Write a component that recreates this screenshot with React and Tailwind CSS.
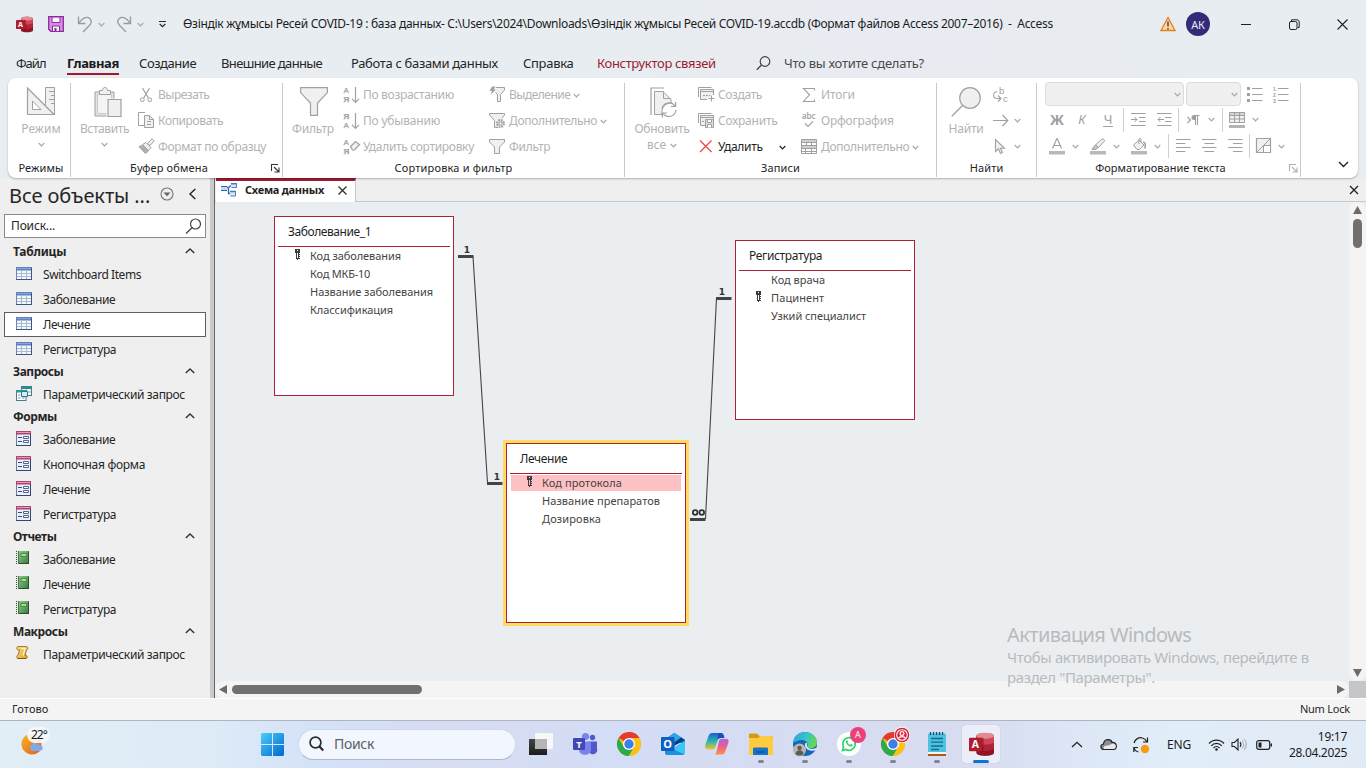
import React from "react";

/* ---------- shared helpers ---------- */
const Svg = ({ w, h, children, className = "" }) => (
  <svg width={w} height={h} viewBox={`0 0 ${w} ${h}`} fill="none" className={"shrink-0 overflow-visible " + className}>
    {children}
  </svg>
);

const Chev = ({ className = "text-[#a8a8a8]" }) => (
  <Svg w={7} h={5} className={className}>
    <path d="M.7 1l2.8 2.8L6.3 1" stroke="currentColor" strokeWidth="1.2" />
  </Svg>
);

const G = "#a0a0a0";
const F = "#f0f0f0";

/* ---------- ribbon icons ---------- */
const IconDesign = () => (
  <Svg w={28} h={28}>
    <path d="M18.500 18V.500h9v27" fill={F} stroke={G} />
    <path d="M22 4.500h5M24 8.500h3M22 12.500h5M24 16.500h3" stroke={G} />
    <path d="M.5 1v26.500h26.500z" fill={F} stroke={G} strokeWidth="1.2" />
    <path d="M5.500 14v8.500H14z" fill="#fff" stroke={G} />
  </Svg>
);
const IconPaste = () => (
  <Svg w={28} h={31}>
    <path d="M1 5h19v24H1z" fill="#e4e4e4" stroke={G} />
    <path d="M3.500 7.500h14v19h-14z" fill="#f4f4f4" stroke="#c8c8c8" />
    <path d="M5.500 7.500v-4h3c0-4 5-4 5 0h3v4z" fill={F} stroke={G} />
    <path d="M12.500 11.500h15v19h-15z" fill="#fff" />
    <path d="M14 12.500h13v17H14z" fill={F} stroke={G} strokeWidth="1.2" />
  </Svg>
);
const IconFunnelBig = () => (
  <Svg w={28} h={29}>
    <path d="M.6.600h26.800v5L17.500 16v12.400h-7V16L.6 5.600z" fill={F} stroke={G} strokeWidth="1.2" />
  </Svg>
);
const IconRefresh = () => (
  <Svg w={29} h={31}>
    <path d="M2 28V1h13" stroke={G} strokeWidth="1.200" />
    <path d="M5.500 27.500v-23H14l8 8V16c-5 0-10 4-9 11.500z" fill={F} stroke={G} />
    <path d="M14.500 4.500v7h7" stroke={G} />
    <path d="M13 22a7.200 7.200 0 0113-3M27 23a7.200 7.200 0 01-13 3.500" stroke={G} strokeWidth="1.200" />
    <path d="M26.700 15v4.500H22M13.300 30.500v-4.500H18" stroke={G} strokeWidth="1.200" />
  </Svg>
);
const IconFindBig = () => (
  <Svg w={30} h={30}>
    <circle cx="19" cy="11" r="10.300" fill={F} stroke={G} strokeWidth="1.200" />
    <path d="M11.500 18.500L.8 29.200" stroke={G} strokeWidth="1.300" />
  </Svg>
);
const IconCut = () => (
  <Svg w={16} h={16}>
    <path d="M4.500 1l5.800 10M11.500 1L5.700 11" stroke={G} strokeWidth="1.200" />
    <circle cx="4.300" cy="12.700" r="1.900" stroke={G} />
    <circle cx="11.700" cy="12.700" r="1.900" stroke={G} />
  </Svg>
);
const IconCopy = () => (
  <Svg w={17} h={17}>
    <path d="M7 13.500H.500V.500H7" stroke={G} />
    <path d="M6.500 3.500h5l4 4v8h-9z" fill={F} stroke={G} />
    <path d="M11.500 3.500v4h4M9 9.500h4M9 12.500h4" stroke={G} />
  </Svg>
);
const IconPainter = () => (
  <Svg w={17} h={17}>
    <path d="M1 8.500l4-1L10.500 13l-3 2.500z" fill="#bdbdbd" stroke={G} />
    <path d="M4.500 6.500l3.500-2 5 5-2.500 3z" fill={F} stroke={G} />
    <path d="M9.500 5.500L14 .800l2.200 2.200L12 7.500z" fill={F} stroke={G} />
    <path d="M2 9l5.500 5M4 8.500l5 5" stroke={G} />
  </Svg>
);
const SortGlyph = ({ a, b, children }) => (
  <Svg w={18} h={18}>
    <text x="0.500" y="6.800" fontSize="8" fontWeight={a === "А" ? "400" : "700"} fill={G} stroke={G} strokeWidth=".25" fontFamily="Liberation Sans, sans-serif">{a}</text>
    <text x="0.500" y="16.300" fontSize="8" fontWeight={b === "А" ? "400" : "700"} fill={G} stroke={G} strokeWidth=".25" fontFamily="Liberation Sans, sans-serif">{b}</text>
    {children}
  </Svg>
);
const SortArrow = () => <path d="M12.500 1v15M9 12.800l3.500 3.500 3.500-3.500" stroke={G} strokeWidth="1.200" />;
const Eraser = () => <path d="M7.500 8.500l5-5 4 3-5 5.500h-2z" fill={F} stroke={G} strokeWidth="1.200" />;
const IconFunnelFlash = () => (
  <Svg w={17} h={17}>
    <path d="M7 1.500h8.500V4L11.500 8.500v7h-3v-7L6.500 6.500" fill={F} stroke={G} />
    <path d="M3 .500h3.500L5 3.500h2L1.500 9 3 5H.500z" fill={G} />
  </Svg>
);
const IconFunnelGear = () => (
  <Svg w={17} h={17}>
    <path d="M9 15.500H5.500V8.500L.5 3V1.500h15V3l-2.500 3" fill={F} stroke={G} />
    <circle cx="11.500" cy="11.500" r="3.200" fill="#fff" stroke={G} strokeWidth="2.500" strokeDasharray="1.700 .8" />
    <circle cx="11.500" cy="11.500" r="1.400" stroke={G} />
  </Svg>
);
const IconFunnel = () => (
  <Svg w={17} h={17}>
    <path d="M.5 1.500h15V4L10.500 9v6.500h-5V9L.5 4z" fill={F} stroke={G} />
  </Svg>
);
const IconNewRec = () => (
  <Svg w={17} h={17}>
    <path d="M.5 11V1.500h13" stroke={G} />
    <path d="M9 13.500H2.500v-10h13V9" fill={F} stroke={G} />
    <path d="M3 5.500h12" stroke={G} />
    <path d="M5 9.500h7" stroke={G} strokeDasharray="2 1" />
    <path d="M13.500 9.500v6M10.500 12.500h6" stroke={G} />
  </Svg>
);
const IconSaveRec = () => (
  <Svg w={17} h={17}>
    <path d="M.5 11V1.500h13" stroke={G} />
    <path d="M7 13.500H2.500v-10h13V7" fill={F} stroke={G} />
    <path d="M3 5.500h12M4 9.500h2" stroke={G} />
    <path d="M7.500 7.500h8v8h-8z" fill="#ddd" stroke={G} />
    <path d="M9.500 7.500h4v3h-4zM9.500 15.500v-3h4v3" fill="#fff" stroke={G} />
  </Svg>
);
const IconDelete = () => (
  <Svg w={17} h={17}>
    <path d="M2 2.500l11.500 11.500M13.500 2.500L2 14" stroke="#e8474c" strokeWidth="1.300" />
  </Svg>
);
const IconSigma = () => (
  <Svg w={16} h={16}>
    <path d="M13.500 3.500v-2h-11l6 6.300-6 6.700h11v-2" stroke={G} strokeWidth="1.100" />
  </Svg>
);
const IconSpell = () => (
  <Svg w={16} h={17}>
    <text x="1" y="7" fontSize="8" fill={G} stroke={G} strokeWidth=".2" fontFamily="Noto Sans, sans-serif">abc</text>
    <path d="M4 11.500l3 3 5-5" stroke={G} strokeWidth="1.100" />
  </Svg>
);
const IconMore = () => (
  <Svg w={17} h={17}>
    <path d="M.5 1.500h15v14H.500z" fill="#fff" stroke={G} />
    <path d="M1 2h14v3H1zM1 8h14v2H1z" fill="#cfcfcf" />
    <path d="M.5 4.500h15M.500 7.500h15M.500 10.500h15M4.500 10.500v5M10.500 10.500v5M5.500 4.500v3M10.500 4.500v3M.5 13.500h15" stroke={G} />
  </Svg>
);
const IconReplace = () => (
  <Svg w={17} h={17}>
    <text x="6" y="8" fontSize="9.500" fill={G} fontFamily="Liberation Sans, sans-serif">b</text>
    <text x="10" y="16" fontSize="9.500" fill={G} fontFamily="Liberation Sans, sans-serif">c</text>
    <path d="M4 5.500C-.5 6.500-.5 12 4 12.500h3.500M5 9.500l3 3-3 3" stroke={G} strokeWidth="1.100" />
  </Svg>
);
const IconGoTo = () => (
  <Svg w={17} h={12}>
    <path d="M0 6.500h14.500M9.500 1l5.300 5.500L9.500 12" stroke={G} strokeWidth="1.100" />
  </Svg>
);
const IconCursor = () => (
  <Svg w={12} h={17}>
    <path d="M1.500 1.500v12l3-2.500 2 4.500 2-1-2-4.200h4z" fill={F} stroke={G} strokeWidth="1.100" />
  </Svg>
);
const IconBullets = () => (
  <Svg w={16} h={16}>
    <path d="M0 1h3v3H0zM0 7h3v3H0zM0 13h3v3H0z" fill={G} />
    <path d="M5 2.500h10.500M5 8.500h10.500M5 14.500h10.500" stroke={G} />
  </Svg>
);
const IconNumbers = () => (
  <Svg w={16} h={17}>
    {["1", "2", "3"].map((n, i) => (
      <text key={n} x="0" y={4.500 + i * 6} fontSize="5" fill={G} stroke={G} strokeWidth=".2" fontFamily="Liberation Sans, sans-serif">{n}</text>
    ))}
    <path d="M5 2.500h10.500M5 8.500h10.500M5 14.500h10.500" stroke={G} />
  </Svg>
);
const IconIndent = ({ out }) => (
  <Svg w={15} h={14}>
    <path d="M0 .5h14.500M8 4.500h6.500M8 8.500h6.500M0 12.500h14.500" stroke={G} />
    <path d={out ? "M7 6.500H1M3.500 4L1 6.500 3.500 9" : "M0 6.500h6M3.500 4L6 6.500 3.500 9"} stroke={G} />
  </Svg>
);
const IconPara = () => (
  <Svg w={13} h={12}>
    <path d="M.5 3l3 3-3 3" stroke={G} strokeWidth="1.200" />
    <path d="M12.500 1.500H7.500M8.500 11V1.500M10.500 11V1.500" stroke={G} strokeWidth="1.100" />
    <path d="M8.500 1H7a2.300 2.300 0 000 5h1.500z" fill={G} />
  </Svg>
);
const IconGridlines = () => (
  <Svg w={17} h={16}>
    <path d="M.5.500h15v10H.500z" fill={F} stroke={G} />
    <path d="M1 1h14v2.500H1z" fill="#d4d4d4" />
    <path d="M.5 3.500h15M.500 7h15M5.500.500v10M10.500.500v10" stroke={G} />
    <path d="M0 13h16v3H0z" fill="#b4b4b4" />
  </Svg>
);
const IconFontColor = () => (
  <Svg w={16} h={17}>
    <path d="M3.500 10.500L7.700.800h.6l4.200 9.700M5 7.500h6" stroke={G} strokeWidth="1.200" />
    <path d="M0 13h16v3.500H0z" fill="#b8b8b8" />
  </Svg>
);
const IconHighlighter = () => (
  <Svg w={16} h={17}>
    <path d="M5.500 7l6.500-6c1-.5 3 1 2.500 2L8.500 9.500z" fill={F} stroke={G} />
    <path d="M5.500 7L3.500 9 2 11.500h3.500l3-2z" fill="#c4c4c4" stroke={G} />
    <path d="M0 13h16v3.500H0z" fill="#b8b8b8" />
  </Svg>
);
const IconBucket = () => (
  <Svg w={16} h={17}>
    <path d="M2.500 7L8 2l5 5-4.500 4.500H6z" fill={F} stroke={G} />
    <path d="M8 6V1.500c0-1.500 2-1.500 2 0V4" stroke={G} />
    <path d="M12 4c2.500 0 2.500 3 2 6.500" stroke={G} strokeWidth="1.600" />
    <path d="M0 13h16v3.500H0z" fill="#b8b8b8" />
  </Svg>
);
const IconAlign = ({ d }) => (
  <Svg w={15} h={14}>
    <path d={d} stroke={G} />
  </Svg>
);
const IconAltRow = () => (
  <Svg w={16} h={16}>
    <path d="M.5.500h14v14H.500z" fill={F} stroke={G} strokeWidth="1.200" />
    <path d="M.500 14.500L14.500.500M7.500 7.500v7M7 7.500h7.500" stroke={G} />
    <path d="M8 8h6v6H8z" fill="#fff" />
  </Svg>
);
const Launcher = ({ className }) => (
  <Svg w={9} h={9} className={className}>
    <path d="M.5 7V.500H7M3 3l4.500 4.500M8 3.500V8H3.500" stroke="currentColor" strokeWidth="1.100" />
  </Svg>
);

/* ---------- ribbon parts ---------- */
const Group = ({ w, label, labelCls = "tracking-[0.13px]", pad = "", launcher, children }) => (
  <div className={"relative flex h-[94px] flex-col border-r border-[#c9c9c9] " + w}>
    <div className="flex h-[76px]">{children}</div>
    <div className={"h-[18px] whitespace-nowrap text-center text-[11px] leading-[18px] text-[#242424] " + labelCls + " " + pad}>{label}</div>
    {launcher}
  </div>
);
const Big = ({ icon, text, sub, cls = "", iconCls = "h-[31px]", w }) => (
  <div className={"flex shrink-0 flex-col items-center pt-1 text-[12px] text-[#b3b3b3] " + w}>
    <div className={iconCls}>{icon}</div>
    <span className={"mt-[3px] whitespace-nowrap leading-[16px] " + cls}>{text}</span>
    {sub}
  </div>
);
const Small = ({ icon, text, cls = "tracking-[-0.27px]", chev, dark, gap = "w-5", chevCls = "ml-[3px]" }) => (
  <div className={"flex h-[26px] shrink-0 items-center text-[12px] " + (dark ? "text-[#1f1f1f]" : "text-[#b3b3b3]")}>
    <div className={"-mt-px flex shrink-0 items-center " + gap}>{icon}</div>
    <span className={"whitespace-nowrap leading-[16px] " + cls}>{text}</span>
    {chev && <Chev className={chevCls + (dark ? " text-[#1f1f1f]" : " text-[#a8a8a8]")} />}
  </div>
);
const Col = ({ className = "-mt-px", children }) => <div className={"flex shrink-0 flex-col " + className}>{children}</div>;
const Cell = ({ w, children }) => <div className={"flex shrink-0 items-center justify-center " + w}>{children}</div>;
const Sep = ({ className = "" }) => <div className={"h-6 w-px shrink-0 bg-[#d0d0d0] " + className} />;

const Ribbon = () => (
  <div className="mx-2 flex h-[100px] rounded-lg bg-white pt-[5px] shadow-[0_1px_2px_rgba(0,0,0,0.28)]">
    <Group w="w-[63px]" label="Режимы" pad="pr-0 pl-[4px]">
      <Big w="w-[66px]" icon={<IconDesign />} text="Режим" sub={<Chev className="mt-[5px] text-[#a8a8a8]" />} />
    </Group>
    <Group w="w-[212px]" label="Буфер обмена" labelCls="tracking-[0.14px] pr-[15px]" launcher={<Launcher className="absolute bottom-[4px] right-[2px] text-[#333]" />}>
      <Big w="w-[67px]" icon={<div className="pl-[7px]"><IconPaste /></div>} text="Вставить" cls="tracking-[-0.41px]" sub={<Chev className="mt-[5px] text-[#a8a8a8]" />} />
      <Col>
        <Small icon={<IconCut />} text="Вырезать" cls="tracking-[-0.5px]" />
        <Small icon={<IconCopy />} text="Копировать" cls="tracking-[-0.38px]" />
        <Small icon={<IconPainter />} text="Формат по образцу" cls="tracking-[-0.34px]" />
      </Col>
    </Group>
    <Group w="w-[342px]" label="Сортировка и фильтр" labelCls="tracking-[0.19px]">
      <Big w="w-[60px]" icon={<div className="pl-px"><IconFunnelBig /></div>} text="Фильтр" cls="tracking-[-0.2px] -mt-px" />
      <Col className="-mt-px w-[146px]">
        <Small icon={<SortGlyph a="А" b="Я"><SortArrow /></SortGlyph>} text="По возрастанию" cls="tracking-[-0.31px]" />
        <Small icon={<SortGlyph a="Я" b="А"><SortArrow /></SortGlyph>} text="По убыванию" cls="tracking-[-0.2px]" />
        <Small icon={<SortGlyph a="А" b="Я"><Eraser /></SortGlyph>} text="Удалить сортировку" cls="tracking-[-0.32px]" />
      </Col>
      <Col>
        <Small icon={<IconFunnelFlash />} text="Выделение" cls="tracking-[-0.5px]" chev />
        <Small icon={<IconFunnelGear />} text="Дополнительно" cls="tracking-[-0.32px]" chev />
        <Small icon={<IconFunnel />} text="Фильтр" cls="tracking-[-0.27px]" />
      </Col>
    </Group>
    <Group w="w-[312px]" label="Записи">
      <Big w="w-[74px]" icon={<div className="pl-[2px]"><IconRefresh /></div>} text="Обновить" cls="tracking-[-0.27px]"
        sub={<span className="flex items-center gap-1 leading-[16px]">все<Chev /></span>} />
      <Col className="-mt-px w-[103px] -ml-px mr-px">
        <Small icon={<IconNewRec />} text="Создать" cls="tracking-[-0.37px]" />
        <Small icon={<IconSaveRec />} text="Сохранить" cls="tracking-[-0.22px]" />
        <Small icon={<IconDelete />} text="Удалить" cls="tracking-[-0.28px]" dark chev chevCls="ml-[16px]" />
      </Col>
      <Col className="-mt-px -ml-px">
        <Small icon={<IconSigma />} text="Итоги" cls="tracking-[-0.1px]" />
        <Small icon={<IconSpell />} text="Орфография" cls="tracking-[-0.22px]" />
        <Small icon={<IconMore />} text="Дополнительно" cls="tracking-[-0.3px]" chev />
      </Col>
    </Group>
    <Group w="w-[100px]" label="Найти">
      <Big w="w-[56px]" icon={<div className="pl-px"><IconFindBig /></div>} text="Найти" cls="tracking-[-0.21px] -mt-px ml-[2px]" />
      <Col className="-mt-[2px]">
        <div className="flex h-[26px] shrink-0 items-center"><IconReplace /></div>
        <div className="flex h-[26px] shrink-0 items-center gap-1"><IconGoTo /><Chev /></div>
        <div className="flex h-[26px] shrink-0 items-center pl-[1px]"><IconCursor /><Chev className="ml-2 text-[#a8a8a8]" /></div>
      </Col>
    </Group>
    <Group w="w-[264px]" label="Форматирование текста" labelCls="tracking-[0.02px] pr-[16px]" launcher={<Launcher className="absolute bottom-[4px] right-[2px] text-[#b0b0b0]" />}>
      <Col className="-mt-px pl-2">
        <div className="flex h-6 shrink-0 items-center">
          <div className="flex h-6 w-[139px] items-center justify-end rounded border border-[#dcdcdc] bg-[#f0f0f0] pr-[2px]"><Chev /></div>
          <div className="ml-[2px] flex h-6 w-[55px] items-center justify-end rounded border border-[#dcdcdc] bg-[#f0f0f0] pr-[2px]"><Chev /></div>
          <div className="-mt-px ml-[6px]"><IconBullets /></div>
          <div className="ml-[10px]"><IconNumbers /></div>
        </div>
        <div className="flex h-[27px] shrink-0 items-center text-[#a0a0a0]">
          <Cell w="w-6"><span className="text-[14px] font-bold leading-none">Ж</span></Cell>
          <Cell w="w-[26px]"><span className="text-[13px] italic leading-none">К</span></Cell>
          <Cell w="w-[26px]"><span className="border-b border-[#a0a0a0] px-px text-[13px] leading-[13px]">Ч</span></Cell>
          <Sep className="ml-[2px]" />
          <Cell w="w-7"><IconIndent /></Cell>
          <Cell w="w-6"><IconIndent out /></Cell>
          <Sep className="ml-[2px]" />
          <Cell w="w-7"><IconPara /></Cell>
          <Cell w="w-2"><Chev /></Cell>
          <Sep className="ml-[7px]" />
          <Cell w="w-7"><IconGridlines /></Cell>
          <Cell w="w-2"><Chev /></Cell>
        </div>
        <div className="flex h-[26px] shrink-0 items-center">
          <Cell w="w-6"><IconFontColor /></Cell>
          <Cell w="w-3"><Chev /></Cell>
          <div className="w-[3px]" />
          <Cell w="w-7"><IconHighlighter /></Cell>
          <Cell w="w-2"><Chev /></Cell>
          <div className="w-[6px]" />
          <Cell w="w-[26px]"><IconBucket /></Cell>
          <Cell w="w-[10px]"><Chev /></Cell>
          <Sep className="ml-[6px]" />
          <Cell w="w-7"><IconAlign d="M0 .5h14.500M0 4.500h9.500M0 8.500h14.500M0 12.500h9.500" /></Cell>
          <Cell w="w-6"><IconAlign d="M0 .5h14.500M2.500 4.500h9.500M0 8.500h14.500M2.500 12.500h9.500" /></Cell>
          <Cell w="w-7"><IconAlign d="M0 .5h14.500M5 4.500h9.500M0 8.500h14.500M5 12.500h9.500" /></Cell>
          <Sep />
          <Cell w="w-7"><IconAltRow /></Cell>
          <Cell w="w-[7px]"><Chev /></Cell>
        </div>
      </Col>
    </Group>
    <div className="flex flex-1 items-end justify-end pb-[10px] pr-[9px]">
      <Svg w={11} h={7}><path d="M1 1l4.500 4.500L10 1" stroke="#222" strokeWidth="1.400" /></Svg>
    </div>
  </div>
);

/* ---------- title bar and tabs ---------- */
const AccessLogo = ({ s }) => (
  <svg width={s} height={s} viewBox="0 0 24 24" className="shrink-0">
    <path d="M7 4c0-4 17-4 17 0v16c0 4-17 4-17 0z" fill="#8f1424" />
    <path d="M7 9.500c4 3.500 13 3.500 17 0v6c-4 3.500-13 3.500-17 0z" fill="#b52236" />
    <path d="M7 3.500h17v6.500c-4 3-13 3-17 0z" fill="#cc4559" />
    <ellipse cx="15.500" cy="3.500" rx="8.500" ry="2.900" fill="#e38a93" />
    <path d="M11 5.500h3v14h-3z" fill="#6d0f1c" opacity=".5" />
    <rect x="0" y="5.500" width="12.500" height="13" rx="1" fill="#b01c2e" />
    <text x="6.200" y="15.600" textAnchor="middle" fontSize="10" fontWeight="700" fill="#fff" fontFamily="Open Sans, sans-serif">A</text>
  </svg>
);

const TitleBar = () => (
  <div className="flex h-12 items-center text-[12px] text-[#1c1c1c]">
    <div className="ml-4"><AccessLogo s={17} /></div>
    <Svg w={16} h={16} className="ml-[15px]">
      <path d="M.7.700h14.600v14.600H2.700l-2-2z" fill="#d58fe0" stroke="#8d2a9e" strokeWidth="1.300" />
      <path d="M4 1h8v5.500H4zM4.500 15v-5h7v5" fill="#f6f0f8" stroke="#8d2a9e" />
      <path d="M6.500 12h2v3h-2z" fill="#8d2a9e" />
    </Svg>
    <Svg w={17} h={18} className="ml-[13px] -mt-px">
      <path d="M1.500 1.500v7h7M1.700 8.200C5 3 10 .800 12.800 3.500c3 3 1 5.500-.5 7L6 17" stroke="#9a9a9a" strokeWidth="1.300" />
    </Svg>
    <Chev className="ml-[4px] text-[#a8a8a8]" />
    <Svg w={17} h={18} className="ml-[11px] -mt-px">
      <path d="M14.500 1.500v7h-7M14.300 8.200C11 3 6 .800 3.200 3.500c-3 3-1 5.500.5 7L10 17" stroke="#9a9a9a" strokeWidth="1.300" />
    </Svg>
    <Chev className="ml-[4px] text-[#a8a8a8]" />
    <Svg w={9} h={8} className="ml-[14px]">
      <path d="M1 1.500h7M1.700 4l2.800 2.700L7.300 4" stroke="#2a2a2a" strokeWidth="1.200" />
    </Svg>
    <span className="ml-[16px] w-[961px] whitespace-pre leading-4 tracking-[-0.302px]">
      {"Өзіндік жұмысы Ресей COVID-19 : база данных- C:\\Users\\2024\\Downloads\\Өзіндік жұмысы Ресей COVID-19.accdb (Формат файлов Access 2007–2016)  -  Access"}
    </span>
    <Svg w={16} h={16} className="ml-[16px]">
      <path d="M8 1.500l7 13H1z" fill="#fbd9a0" stroke="#e07f1d" strokeWidth="1.300" />
      <path d="M8 5.500v5M8 12v1.500" stroke="#333" strokeWidth="1.300" />
    </Svg>
    <div className="ml-[10px] flex h-6 w-6 items-center justify-center rounded-full bg-[#332b78] text-[11px] leading-none tracking-[-0.3px] text-[#e9e7f5]">АК</div>
    <Svg w={11} h={11} className="ml-[31px]"><path d="M0 5.500h10" stroke="#222" /></Svg>
    <Svg w={11} h={11} className="ml-[37px]">
      <rect x=".5" y="2.500" width="7.500" height="8" rx="1.500" stroke="#222" />
      <path d="M2.500 2V.800h5.500c1.500 0 2.200 1 2.200 2.200v5.500h-1.500" stroke="#222" />
    </Svg>
    <Svg w={11} h={11} className="ml-[37px]"><path d="M.5.500l10 10M10.500.500l-10 10" stroke="#222" strokeWidth="1.100" /></Svg>
  </div>
);

const tabs = [
  ["Файл", "w-[51px] tracking-[-1px]"],
  ["Создание", "w-[82px] tracking-[-0.44px]"],
  ["Внешние данные", "w-[130px] tracking-[-0.63px]"],
  ["Работа с базами данных", "w-[172px] tracking-[-0.33px]"],
  ["Справка", "w-[74px] tracking-[-0.3px]"],
];
const Tab = ({ t }) => <span className={"shrink-0 whitespace-nowrap " + t[1]}>{t[0]}</span>;
const TabRow = () => (
  <div className="flex h-[30px] items-center pl-4 text-[13px] leading-[18px] text-[#262626]">
    <Tab t={tabs[0]} />
    <div className="mr-5 mt-[3px] flex h-[24px] w-[52px] flex-col">
      <span className="h-[19px] pt-px font-bold tracking-[-0.4px] text-[#1a1a1a]">Главная</span>
      <div className="mt-[1px] h-[2px] w-[52px] shrink-0 bg-[#a4182e]" />
    </div>
    {tabs.slice(1).map((t) => <Tab key={t[0]} t={t} />)}
    <span className="w-[159px] shrink-0 whitespace-nowrap tracking-[-0.33px] text-[#9b1c2f]">Конструктор связей</span>
    <Svg w={15} h={15}>
      <circle cx="9" cy="5.500" r="4.800" stroke="#444" strokeWidth="1.200" />
      <path d="M5.500 9L.8 13.800" stroke="#444" strokeWidth="1.300" />
    </Svg>
    <span className="ml-[13px] whitespace-nowrap tracking-[-0.27px] text-[#4a4a4a]">Что вы хотите сделать?</span>
  </div>
);

/* ---------- navigation pane ---------- */
const TableIcon = () => (
  <Svg w={16} h={13}>
    <rect x=".5" y=".5" width="15" height="12" fill="#f4f7fc" stroke="#6c86b8" />
    <path d="M0 0h16v3.500H0z" fill="#5f80bd" />
    <path d="M1 1.500h14" stroke="#8ba6d8" />
    <path d="M1 6.500h14M1 9.500h14M5.500 3.500v9M10.500 3.500v9" stroke="#a9b8d4" />
    <path d="M0 12.500h16M15.500 1v12" stroke="#3d5486" />
  </Svg>
);
const QueryIcon = () => (
  <Svg w={16} h={15}>
    <rect x="5.500" y=".5" width="10" height="9" fill="#f1f7f9" stroke="#3d7f8c" />
    <path d="M5 0h11v3H5z" fill="#2d8a8a" />
    <path d="M10.500 3v6M6 6h9" stroke="#8fb0b8" />
    <rect x=".5" y="4.500" width="9.500" height="10" fill="#fff" stroke="#4f7597" />
    <path d="M0 4h10v2.500H0z" fill="#3a9494" />
    <path d="M2 9h2.500M6 9h2.500M2 12h2.500M6 12h2.500" stroke="#6f8fb0" />
    <path d="M5.500 5.500h6v5h-6z" fill="#d6ecf2" stroke="#2a7a88" />
  </Svg>
);
const FormIcon = () => (
  <Svg w={15} h={15}>
    <rect x=".5" y=".5" width="14" height="14" fill="#e8effb" stroke="#6b7da3" />
    <path d="M0 0h15v3.500H0z" fill="#b4426f" />
    <path d="M1 1.500h13" stroke="#e49ab9" />
    <path d="M2 6.500h4M2 10.500h4" stroke="#3c4d73" />
    <path d="M7.500 5.500h5v2h-5zM7.500 9.500h5v2h-5z" fill="#fff" stroke="#54658d" />
    <path d="M0 14.500h15M14.500 3v12" stroke="#34466e" />
  </Svg>
);
const ReportIcon = () => (
  <Svg w={14} h={14}>
    <defs>
      <linearGradient id="rep" x1="0" y1="0" x2="1" y2="1"><stop offset="0" stopColor="#8ecb86" /><stop offset=".6" stopColor="#5c9c5a" /><stop offset="1" stopColor="#3c6f3f" /></linearGradient>
    </defs>
    <path d="M2 0h11v13H2z" fill="url(#rep)" />
    <path d="M12.500.5v12.500M2 12.500h11" stroke="#2d4f31" />
    <rect x="5" y="2.500" width="5.500" height="3" fill="#a8dba0" stroke="#4a8a4a" />
    <path d="M.5 0v13" stroke="#444" strokeDasharray="1 1" />
    <path d="M1.500 0v13" stroke="#e4ece4" />
    <path d="M2.500 0v13" stroke="#47784a" />
  </Svg>
);
const MacroIcon = () => (
  <Svg w={13} h={14}>
    <defs>
      <linearGradient id="mac" x1="0" y1="0" x2="1" y2="1"><stop offset="0" stopColor="#f8dc84" /><stop offset="1" stopColor="#e0a230" /></linearGradient>
    </defs>
    <path d="M2 .5h8.500c2 .5 1.500 3 0 3.500l-1.500 5.500h1.500c1 .5 1 2.500 0 3H2c-2-.5-1.500-3 0-3.500L3.700 4H2C.3 3.500.3 1 2 .5z" fill="url(#mac)" stroke="#a87a22" />
    <path d="M5.200 2.500h4L7 9.500" stroke="#fdf1c0" strokeWidth="1.300" />
    <path d="M1.500 12.500h8.500" stroke="#7b5614" />
  </Svg>
);
const Caret = () => <Svg w={10} h={6}><path d="M.8 5L5 .900 9.200 5" stroke="#333" strokeWidth="1.400" /></Svg>;

const nav = [
  { h: "Таблицы", c: "tracking-[-0.22px]", icon: TableIcon, items: [["Switchboard Items", "tracking-[-0.43px]"], ["Заболевание", "tracking-[-0.38px]"], ["Лечение", "tracking-[-0.38px]", true], ["Регистратура", "tracking-[-0.36px]"]] },
  { h: "Запросы", c: "tracking-[-0.48px]", icon: QueryIcon, items: [["Параметрический запрос", "tracking-[-0.35px]"]] },
  { h: "Формы", c: "tracking-[-0.5px]", icon: FormIcon, items: [["Заболевание", "tracking-[-0.38px]"], ["Кнопочная форма", "tracking-[-0.3px]"], ["Лечение", "tracking-[-0.38px]"], ["Регистратура", "tracking-[-0.36px]"]] },
  { h: "Отчеты", c: "tracking-[-0.47px]", icon: ReportIcon, items: [["Заболевание", "tracking-[-0.38px]"], ["Лечение", "tracking-[-0.38px]"], ["Регистратура", "tracking-[-0.36px]"]] },
  { h: "Макросы", c: "tracking-[-0.43px]", icon: MacroIcon, items: [["Параметрический запрос", "tracking-[-0.35px]"]] },
];

const NavPane = () => (
  <div className="flex w-[210px] shrink-0 flex-col bg-[#efefef] text-[12px] leading-4 text-[#262626]">
    <div className="flex h-9 items-center pl-[9px] pr-[14px]">
      <span className="w-[151px] whitespace-nowrap text-[20px] leading-7 tracking-[-0.08px]">Все объекты ...</span>
      <Svg w={14} h={14} className="-mt-[5px]">
        <circle cx="7" cy="7" r="6" stroke="#777" strokeWidth="1.100" />
        <path d="M3.500 5.500h7L7 9.200z" fill="#666" />
      </Svg>
      <Svg w={7} h={12} className="ml-auto -mt-[5px]"><path d="M6.300 1L1 6l5.300 5" stroke="#222" strokeWidth="1.400" /></Svg>
    </div>
    <div className="ml-1 flex h-6 w-[202px] items-center justify-between border border-[#8a8a8a] bg-white pl-[6px] pr-[3px]">
      <span className="tracking-[-0.16px]">Поиск...</span>
      <Svg w={17} h={17}>
        <circle cx="10.500" cy="6" r="5" stroke="#444" strokeWidth="1.200" />
        <path d="M7 9.700L1 15.500" stroke="#444" strokeWidth="1.300" />
      </Svg>
    </div>
    <div className="flex flex-col pt-1">
      {nav.map((g) => (
        <div key={g.h} className="flex flex-col">
          <div className="flex h-5 items-center justify-between pl-[13px] pr-[15px]">
            <span className={"font-bold " + g.c}>{g.h}</span>
            <div className="-mt-[2px]"><Caret /></div>
          </div>
          {g.items.map(([t, c, sel], i) => (
            <div key={i} className={"mx-1 flex h-[25px] items-center border pl-[11px] " + (sel ? "border-[#5e5e5e] bg-white" : "border-transparent")}>
              <div className="-mt-[3px] w-[27px]"><g.icon /></div>
              <span className={"whitespace-nowrap pt-px " + c}>{t}</span>
            </div>
          ))}
        </div>
      ))}
    </div>
  </div>
);

/* ---------- relationship diagram ---------- */
const Key = () => (
  <svg width="6" height="11" viewBox="0 0 6 11" shapeRendering="crispEdges">
    <path d="M0 0h5v4H0z M1 4h1v6H1z M3 4h1v6H3z M2 9h1v2H2z M4 5h1v1H4z M4 7h1v1H4z M4 9h1v1H4z" fill="#3c3c3c" />
    <path d="M2 1h1v1H2z" fill="#fff" />
  </svg>
);
const Node = ({ pos, title, titleCls, rows, active }) => (
  <div className={"absolute flex h-[180px] w-[180px] flex-col border border-[#ae2033] bg-white " + pos + (active ? " shadow-[0_0_0_3px_#ffdb61]" : "")}>
    <div className="mx-[3px] flex h-[30px] border-b border-[#ae2033] pl-[10px]">
      <span className={"whitespace-nowrap text-[12px] leading-[29px] text-[#1f1f1f] " + titleCls}>{title}</span>
    </div>
    {rows.map(([t, c, key], i) => (
      <div key={t} className="flex h-[18px] items-center px-1">
        <div className={"flex h-4 w-[170px] items-center " + (active && i === 0 ? "bg-[#fec1c3]" : "")}>
          <div className="flex w-[31px] pb-[3px] pl-[16px]">{key && <Key />}</div>
          <span className={"whitespace-nowrap text-[11px] leading-4 text-[#444] " + c}>{t}</span>
        </div>
      </div>
    ))}
  </div>
);

const Arrow = ({ d }) => <Svg w={9} h={9}><path d={d} fill="#6b6b6b" /></Svg>;

const Canvas = () => (
  <div className="flex min-w-0 flex-1 flex-col border-l border-[#666]">
    <div className="flex h-6 bg-[#efefef]">
      <div className="w-px border-b border-[#c8c8c8]" />
      <div className="flex w-[140px] items-center border-t-[3px] border-r border-t-[#a4182e] border-r-[#c8c8c8] bg-white pb-[3px] pl-[5px]">
        <Svg w={16} h={14}>
          <path d="M0 4.500h7M7.500 4.500L10 2.500M7.500 4.500v6H10" stroke="#2c62b8" strokeWidth="1.300" />
          <path d="M0 3h6v5H0z" fill="#c7d8f2" /><path d="M0 3.500h6M0 7.500h6" stroke="#2c62b8" />
          <path d="M10 0h6v5h-6zM9 8h6v5.500H9z" fill="#dce7f8" /><path d="M10 .8h6M9 8.500h6" stroke="#3f78cf" strokeWidth="1.600" />
          <path d="M10.500 4.500h5v-4M9.500 13h5V8.500" stroke="#5c7fb8" />
        </Svg>
        <span className="ml-2 whitespace-nowrap text-[11px] font-bold leading-4 tracking-[-0.25px] text-[#222]">Схема данных</span>
        <Svg w={9} h={9} className="ml-[14px]"><path d="M.5.500l8 8M8.500.500l-8 8" stroke="#333" strokeWidth="1.300" /></Svg>
      </div>
      <div className="flex flex-1 items-center justify-end border-b border-[#c8c8c8] pr-[7px]">
        <Svg w={10} h={10}><path d="M1 1l8 8M9 1L1 9" stroke="#222" strokeWidth="1.300" /></Svg>
      </div>
    </div>
    <div className="flex min-h-0 flex-1 bg-[#ebeef1]">
      <div className="flex min-w-0 flex-1 flex-col">
        <div className="relative flex-1">
          <svg className="absolute left-0 top-0" width="1134" height="479" viewBox="215 202 1134 479" fill="none">
            <path d="M473 256.500L487.500 483M716.500 298L705.500 519" stroke="#444" strokeWidth="1.100" />
            <path d="M458 256.500h15.500M487 483.500h15.500M716 298.500h15.500M690 519.500h15.500" stroke="#444" strokeWidth="3" />
            <g fill="#333" fontSize="9" fontWeight="700" fontFamily="DejaVu Sans, sans-serif" textAnchor="middle">
              <text x="467" y="252.500">1</text>
              <text x="497" y="479.500">1</text>
              <text x="722" y="294.500">1</text>
            </g>
            <circle cx="695.200" cy="512.500" r="2.300" stroke="#333" strokeWidth="1.800" />
            <circle cx="701.800" cy="512.500" r="2.300" stroke="#333" strokeWidth="1.800" />
          </svg>
          <Node pos="left-[59px] top-[14px]" title="Заболевание_1" titleCls="tracking-[-0.42px]"
            rows={[["Код заболевания", "tracking-[-0.06px]", true], ["Код МКБ-10", "tracking-[-0.22px]"], ["Название заболевания", "tracking-[-0.04px]"], ["Классификация", "tracking-[-0.04px]"]]} />
          <Node pos="left-[520px] top-[38px]" title="Регистратура" titleCls="tracking-[-0.36px]"
            rows={[["Код врача", ""], ["Пацинент", "tracking-[0.1px]", true], ["Узкий специалист", "tracking-[-0.05px]"]]} />
          <Node active pos="left-[291px] top-[241px]" title="Лечение" titleCls="tracking-[-0.38px]"
            rows={[["Код протокола", "tracking-[0.1px]", true], ["Название препаратов", "tracking-[0.05px]"], ["Дозировка", "tracking-[0.13px]"]]} />
          <div className="absolute left-[792px] top-[420px] z-10 flex w-[330px] flex-col whitespace-nowrap text-[#b8bbbd]">
            <span className="text-[20px] leading-[26px] tracking-[-0.6px]">Активация Windows</span>
            <span className="-mt-px text-[15px] leading-5 tracking-[-0.365px]">Чтобы активировать Windows, перейдите в</span>
            <span className="text-[15px] leading-5 tracking-[-0.38px]">раздел "Параметры".</span>
          </div>
        </div>
        <div className="flex h-[17px] items-center rounded-full bg-[#f4f4f4] px-1">
          <Arrow d="M8 0v9L0 4.500z" />
          <div className="ml-1 h-[9px] w-[190px] rounded-full bg-[#707070]" />
          <div className="ml-auto"><Arrow d="M1 0v9l8-4.500z" /></div>
        </div>
      </div>
      <div className="flex w-[17px] flex-col">
        <div className="flex flex-1 flex-col items-center rounded-full bg-[#f4f4f4] py-1">
          <Arrow d="M0 8h9L4.500 0z" />
          <div className="mt-1 h-[29px] w-[9px] rounded-full bg-[#707070]" />
          <div className="mt-auto"><Arrow d="M0 1h9L4.500 9z" /></div>
        </div>
        <div className="h-[17px] bg-[#c5c6ca]" />
      </div>
    </div>
  </div>
);

/* ---------- taskbar ---------- */
const App32 = ({ children, dot }) => (
  <div className="flex h-[47px] w-11 shrink-0 flex-col items-center pt-[11px]">
    <svg width="26" height="24" viewBox="0 0 26 24" className="overflow-visible">{children}</svg>
    {dot && <div className="mt-[4px] h-[3px] w-[6px] rounded-full bg-[#82868f]" />}
  </div>
);
const Chrome = () => (
  <g>
    <circle cx="13" cy="12" r="12" fill="#fbc116" />
    <path d="M13 12L2.600 6A12 12 0 0123.400 6z" fill="#e33b2e" />
    <path d="M13 0a12 12 0 0110.400 6H13z" fill="#e33b2e" />
    <path d="M2.600 6A12 12 0 0013 24l5.200-9L13 12 7.800 15z" fill="#2da94f" />
    <path d="M13 6h10.400A12 12 0 0113 24l5.200-9z" fill="#fbc116" />
    <circle cx="13" cy="12" r="6" fill="#fff" />
    <circle cx="13" cy="12" r="4.700" fill="#3d7fe8" />
  </g>
);

const Taskbar = () => (
  <div className="flex h-12 border-t border-[#aeb5c0] bg-[linear-gradient(90deg,#e2eef6_0%,#deebf7_15%,#d3e1f9_24%,#d7dcf2_32%,#d3ddf5_45%,#d6dcf2_58%,#d8dcf0_72%,#dce6f6_78%,#e1edf9_86%,#e1ebf6_100%)]">
    <div className="flex w-[250px] pl-[20px] pt-[6px]">
      <svg width="32" height="28" viewBox="0 0 32 28">
        <defs><linearGradient id="moon" x1="0" y1="0" x2="1" y2="1"><stop offset="0" stopColor="#f3b72e" /><stop offset="1" stopColor="#e65e12" /></linearGradient></defs>
        <path d="M9 7A10.500 10.500 0 1020 24c-7-1-9-8-6-15z" fill="url(#moon)" />
        <circle cx="11.500" cy="17" r="10" fill="url(#moon)" />
        <path d="M12 24a3.500 3.500 0 01-.5-6c1.500-3 6.500-2.500 7 0 5 0 6 5.500 1 6z" fill="#7fa9ea" />
        <rect x="7" y="0" width="23" height="16" rx="8" fill="#f4f8fb" opacity=".93" />
        <text x="11" y="12.300" fontSize="12" letterSpacing="-1" fill="#1c1c1c" fontFamily="Noto Sans, sans-serif">22°</text>
      </svg>
    </div>
    <div className="flex w-[48px] items-center pl-[11px]">
      <svg width="23" height="23" viewBox="0 0 23 23">
        <defs><linearGradient id="win" x1="0" y1="0" x2="1" y2="1"><stop offset="0" stopColor="#4ccdfb" /><stop offset="1" stopColor="#0067cf" /></linearGradient></defs>
        <path d="M1 0h10v11H0V1zM12 0h10l1 1v10H12zM0 12h11v11H1l-1-1zM12 12h11v10l-1 1H12z" fill="url(#win)" />
      </svg>
    </div>
    <div className="mt-2 flex h-[31px] w-[218px] items-center rounded-full border border-[#d0d8e8] border-b-[#aeb8c9] bg-[#f2f6fe] pb-px pl-[10px]">
      <Svg w={15} h={16}>
        <circle cx="6.500" cy="6.500" r="5.400" stroke="#2a2d33" strokeWidth="1.700" />
        <path d="M10.500 10.500l3.700 4" stroke="#2a2d33" strokeWidth="2.200" />
      </Svg>
      <span className="ml-[10px] text-[14px] leading-5 tracking-[-0.32px] text-[#5b6068]">Поиск</span>
    </div>
    <div className="ml-[3px] flex">
      <App32>
        <defs><linearGradient id="tv1" x1="0" y1="0" x2="0" y2="1"><stop offset="0" stopColor="#444" /><stop offset="1" stopColor="#1c1c1c" /></linearGradient></defs>
        <rect x="1" y="7" width="18" height="16" fill="url(#tv1)" />
        <rect x="7" y="1" width="18" height="16" rx="1" fill="#f7f7f7" />
        <rect x="7" y="7" width="12" height="10" fill="#b5b5b5" />
      </App32>
      <App32>
        <circle cx="20.500" cy="5.500" r="2.700" fill="#5059c9" /><path d="M17 9.500h8v7a4 4 0 01-8 3z" fill="#5059c9" />
        <circle cx="13.500" cy="4.500" r="3.600" fill="#7b83eb" /><path d="M7 9.500h12v8c0 7-12 7-12 0z" fill="#7b83eb" />
        <rect x="1" y="6" width="12" height="12" rx="1" fill="#4147b5" />
        <text x="7" y="15.500" fontSize="9.500" fontWeight="700" fill="#fff" textAnchor="middle" fontFamily="Open Sans, sans-serif">T</text>
      </App32>
      <App32><Chrome /></App32>
      <App32>
        <path d="M4 8L14 1l11 7v3H4z" fill="#1580d8" />
        <path d="M7 6l8-5 9.500 6.500L17 12H7z" fill="#2fa5ec" />
        <path d="M25 8L12 15v-3l9-6.500z" fill="#0a3f88" />
        <path d="M25 9v12a2 2 0 01-2 2H8l3-6z" fill="#3ac7f5" />
        <path d="M5 14l19 8-1 1H7a2 2 0 01-2-2z" fill="#1e90e2" />
        <rect x="1" y="5" width="13.500" height="14" rx="1" fill="#0f5fc0" />
        <text x="7.700" y="16" fontSize="11" fontWeight="700" fill="#fff" textAnchor="middle" fontFamily="Open Sans, sans-serif">O</text>
      </App32>
      <App32>
        <defs>
          <linearGradient id="cpa" x1="0" y1="0" x2="0" y2="1"><stop offset="0" stopColor="#1b5fd6" /><stop offset=".5" stopColor="#27b7b0" /><stop offset="1" stopColor="#f0c32e" /></linearGradient>
          <linearGradient id="cpb" x1="0" y1="0" x2="0" y2="1"><stop offset="0" stopColor="#f59a45" /><stop offset=".5" stopColor="#ee5f86" /><stop offset="1" stopColor="#a862e6" /></linearGradient>
        </defs>
        <path d="M8.500 1H17c1.500 0 2.300 1 2.800 2.700l.7 2.300h-3.500c-2 0-3 1-3.500 2.800l-2 6.200c-.5 1.500-1.500 2.500-3 2.500H4c-2.500 0-3.500-2-2.800-4.500L4.200 5C5 2.300 6 1 8.500 1z" fill="url(#cpa)" />
        <path d="M14 1h3c1.500 0 2.300 1 2.800 2.700l.7 2.300h-3.500c-2 0-3 1-3.500 2z" fill="#1b4fb8" />
        <g transform="rotate(180 13 12)">
          <path d="M8.500 1H17c-1.500 0-2.500 1-3 3l-2.500 11c-.5 1.500-1.500 2.500-3 2.500H4c-2.500 0-3.500-2-2.800-4.500L4.200 5C5 2.300 6 1 8.500 1z" fill="url(#cpb)" stroke="#d8def2" strokeWidth=".8" />
        </g>
      </App32>
      <App32 dot>
        <path d="M1 3c0-1 .5-1.500 1.500-1.500H9L11.500 4H25v9H1z" fill="#d49a12" />
        <path d="M1 6h9l2-2h12l1 1v18H1z" fill="#fccb3f" />
        <path d="M5 23v-6c0-1 .5-1.500 1.500-1.500h12c1 0 1.500.500 1.500 1.500v6z" fill="#1673c9" />
        <path d="M8 20h9" stroke="#0d56a0" strokeWidth="1.500" />
      </App32>
      <App32 dot>
        <defs>
          <linearGradient id="edg" x1="0" y1="0" x2="1" y2=".4"><stop offset="0" stopColor="#2a9fe0" /><stop offset=".6" stopColor="#38c6c8" /><stop offset="1" stopColor="#63d653" /></linearGradient>
        </defs>
        <circle cx="13" cy="12" r="12" fill="#1565b8" />
        <path d="M1 11C2 4 7 0 13 0c8 0 12.500 6 12 11-.500 4-4 5.500-7 5.500-2.500 0-3.500-1.500-2.500-3 1-3-2-5.500-5.500-5.500-4 0-7.500 2-9 3z" fill="url(#edg)" />
        <path d="M14.500 11c-2 4 2 9 10 5.800" fill="none" stroke="#dfe9f7" strokeWidth="1.800" />
        <circle cx="7.500" cy="18" r="6.500" fill="#b9b6b2" />
        <circle cx="7.500" cy="16" r="2.200" fill="#5e5b58" /><path d="M3.500 22c0-5 8-5 8 0-2 2-6 2-8 0z" fill="#5e5b58" />
      </App32>
      <App32 dot>
        <circle cx="13" cy="12" r="12" fill="#fff" />
        <path d="M6.500 18.500l1-3.500a6.300 6.300 0 112.300 2.400z" fill="none" stroke="#2bd366" strokeWidth="1.700" />
        <path d="M10 9c1-1.500 1.500-.5 2 .5l-.5 1c.5 1 1.500 2 2.500 2.300l1-.8c2 1 2 1 1 2.200-2 1.500-7-2.500-6-5.200z" fill="#2bd366" />
        <circle cx="22" cy="3" r="8" fill="#ec407a" />
        <text x="22" y="6.300" fontSize="9" fill="#fff" textAnchor="middle" fontFamily="Noto Sans, sans-serif">A</text>
      </App32>
      <App32 dot>
        <Chrome />
        <circle cx="22" cy="3" r="8" fill="#fff" /><circle cx="22" cy="3" r="7.300" fill="#d71f35" />
        <circle cx="22" cy="3" r="5.300" fill="none" stroke="#fff" strokeWidth="1.100" />
        <circle cx="22" cy="1.500" r="1.900" fill="none" stroke="#fff" strokeWidth="1.200" /><path d="M18.500 6.500c1-2.500 6-2.500 7 0" fill="none" stroke="#fff" strokeWidth="1.200" />
      </App32>
      <App32 dot>
        <rect x="4" y="1.500" width="18" height="20" rx="1" fill="#4cc3e2" />
        <path d="M4 20h18v2H4z" fill="#f4f4f4" /><path d="M4 22h18v2H4z" fill="#a75a1a" />
        <path d="M6.500 0v3M9.500 0v3M12.500 0v3M15.500 0v3M18.500 0v3" stroke="#15506a" strokeWidth="1.300" />
        <path d="M7 6.500h12M7 10.200h12M7 14h12M7 17.500h8" stroke="#156d8d" strokeWidth="1.300" />
      </App32>
    </div>
    <div className="ml-[3px] mt-1 flex h-[38px] w-[38px] flex-col items-center rounded bg-[#ebeef8] pt-[7px] shadow-[0_0_1px_rgba(120,130,160,0.5)]">
      <AccessLogo s={25} />
      <div className="mt-[3px] h-[3px] w-4 shrink-0 rounded-full bg-[#0f74cf]" />
    </div>
    <div className="ml-auto flex items-center pr-[19px] text-[12px] leading-4 text-[#1c1c1c]">
      <Svg w={12} h={7}><path d="M1 6l5-4.700L11 6" stroke="#222" strokeWidth="1.300" /></Svg>
      <Svg w={18} h={13} className="ml-[17px]">
        <path d="M4 11.500c-4 0-4-5-.5-5.500C4 .5 11 .5 12 4.500c5-.5 6 6.500 1.500 7z" fill="#8d8d8d" stroke="#222" strokeWidth="1.200" />
        <path d="M4 11c-1-3 2-4 4-3.500L13 5.500c4 .5 3.500 5 .5 5.500z" fill="#e8e8e8" />
      </Svg>
      <Svg w={18} h={18} className="ml-[14px]">
        <path d="M2 7c1-4 5-6 8.500-5 2 .5 3.500 2 4.500 4M15.500 1.500V6H11M6.500 16c-2-.5-4-2-4.500-4.500M6 11.500H1.800V16" stroke="#222" strokeWidth="1.200" />
        <circle cx="13" cy="13" r="4.200" fill="#f79a10" />
      </Svg>
      <span className="ml-[17px] w-[41px] tracking-[-0.1px]">ENG</span>
      <Svg w={17} h={12}>
        <path d="M1 4.500c4-4.500 11-4.500 15 0M3.200 6.800c3-3.300 7.600-3.300 10.600 0M5.500 9c1.800-2 4.200-2 6 0" stroke="#222" strokeWidth="1.200" />
        <circle cx="8.500" cy="10.500" r="1.300" fill="#222" />
      </Svg>
      <Svg w={17} h={13} className="ml-[6px]">
        <path d="M1 4.500h2.500L7 1v11L3.500 8.500H1z" stroke="#222" strokeWidth="1.100" />
        <path d="M9 4.200c1.200 1.500 1.200 3.100 0 4.600" stroke="#222" strokeWidth="1.100" />
        <path d="M11 2.500c2 2.500 2 5.500 0 8M13 1c3 3.500 3 7.500 0 11" stroke="#aeb5bf" strokeWidth="1.100" />
      </Svg>
      <Svg w={17} h={10} className="ml-[8px]">
        <rect x=".7" y=".7" width="13" height="8.600" rx="2" stroke="#222" strokeWidth="1.200" />
        <path d="M2.500 2.500h3v5h-3zM14.500 3.500h1.500v3h-1.500z" fill="#222" />
      </Svg>
      <div className="ml-[16px] flex w-[58px] flex-col items-end whitespace-nowrap">
        <span className="tracking-[-0.3px]">19:17</span>
        <span className="tracking-[-0.33px]">28.04.2025</span>
      </div>
    </div>
  </div>
);

export default function App() {
  return (
    <div className="flex h-[768px] w-[1366px] flex-col overflow-hidden bg-[#e8edf1] font-['Noto_Sans','Open_Sans',sans-serif]">
      <div className="relative z-10 flex h-[178px] flex-col bg-[linear-gradient(90deg,#e8edf1_0%,#e8edf1_45%,#e8ebf1_65%,#e8edf1_90%)]">
        <TitleBar />
        <TabRow />
        <Ribbon />
      </div>
      <div className="flex h-[520px]">
        <NavPane />
        <div className="w-1 shrink-0 bg-[#cacaca]" />
        <Canvas />
      </div>
      <div className="flex h-[22px] items-center justify-between border-t border-white bg-[#f4f4f4] pb-px pl-3 pr-4 text-[11px] leading-4 text-[#262626]">
        <span className="tracking-[0.1px]">Готово</span>
        <span className="tracking-[-0.22px]">Num Lock</span>
      </div>
      <Taskbar />
    </div>
  );
}
